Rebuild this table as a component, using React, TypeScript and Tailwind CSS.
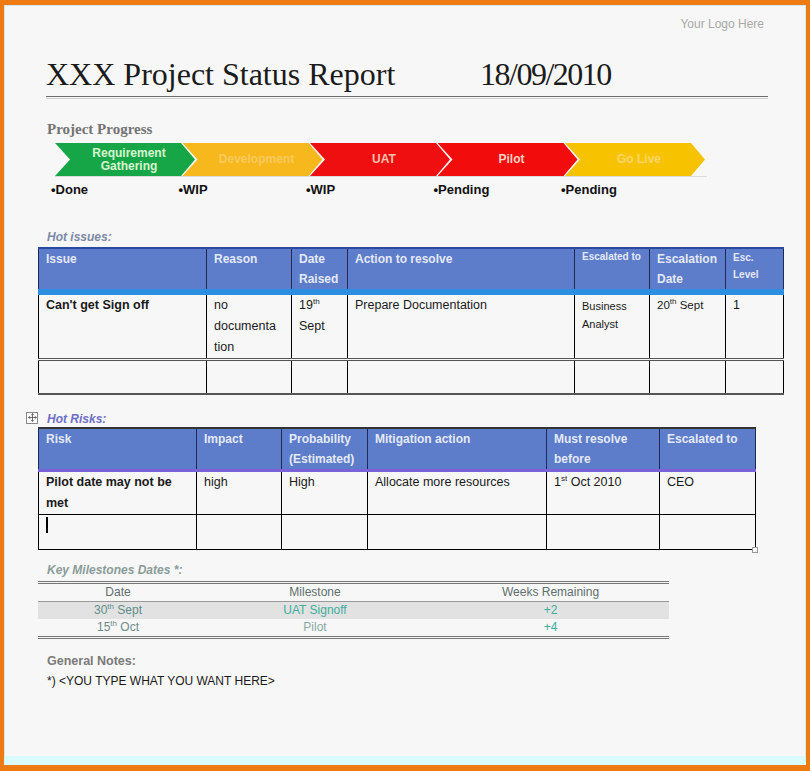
import React from "react";
import { Move } from "lucide-react";

const SANS = "font-['Liberation_Sans',Arial,sans-serif]";
const SERIF = "font-['Liberation_Serif','Times_New_Roman',serif]";

const STEPS = [
  { label: "Requirement Gathering", bg: "bg-[#17a647]", fg: "text-[#d8f5d0]", status: "Done" },
  { label: "Development", bg: "bg-[#f6b81c]", fg: "text-[#f9c95e]", status: "WIP" },
  { label: "UAT", bg: "bg-[#f00f10]", fg: "text-[#f7c2b0]", status: "WIP" },
  { label: "Pilot", bg: "bg-[#f20c0c]", fg: "text-[#f7d0c4]", status: "Pending" },
  { label: "Go Live", bg: "bg-[#f7c300]", fg: "text-[#f9d46a]", status: "Pending" },
];

const Ord = ({ n, s }: { n: string; s: string }) => (
  <span>
    {n}
    <span className="relative -top-[5px] text-[8px] leading-none">{s}</span>
  </span>
);

const th = "align-top text-left font-bold text-[12px] leading-[20px] text-[#e4e9f6] px-[7px] pt-0 border-x border-[#1e2a55]";
const td = "align-top text-left text-[12.5px] leading-[21px] text-[#1a1a1a] px-[7px] pt-0 border-x border-black";

const App: React.FC = () => {
  return (
    <div className="w-[810px] h-[771px] bg-[#ee7a12] p-[4px] pt-[5px] pb-[6px]">
      <div className={`h-full bg-[#f7f7f7] border-x border-t border-[#cfeaf3] border-b-[9px] border-b-[#d9fbfb] pl-[33px] ${SANS}`}>
        {/* logo */}
        <div className="flex justify-end pr-[41px] pt-[11px] text-[12px] leading-[14px] text-[#a8a8a8]">
          Your Logo Here
        </div>

        {/* title */}
        <div className={`flex items-baseline ml-[8px] mt-[25px] ${SERIF} text-[#1b1b1b] text-[32px] leading-[36px]`}>
          <div className="w-[434px]">XXX Project Status Report</div>
          <div className="tracking-[-1.5px]">18/09/2010</div>
        </div>
        <div className="ml-[8px] mt-[4px] w-[722px] h-[3px] border-t border-[#6a6a6a] border-b border-b-[#d0d0d0]" />

        {/* progress */}
        <div className={`ml-[9px] mt-[22px] ${SERIF} font-bold text-[15px] leading-[16px] text-[#747474]`}>
          Project Progress
        </div>
        <div className="flex ml-[17px] mt-[6px]">
          {STEPS.map((s, i) => (
            <div
              key={s.label}
              className={[
                "w-[140px] h-[33px] flex items-center justify-center pl-[14px] pr-[6px] text-center font-bold text-[12px] leading-[13px]",
                "[clip-path:polygon(0_0,calc(100%-14px)_0,100%_50%,calc(100%-14px)_100%,0_100%,15px_50%)]",
                s.bg,
                s.fg,
                i > 0 ? "-ml-[12.5px]" : "",
              ].join(" ")}
            >
              {s.label}
            </div>
          ))}
        </div>
        <div className="ml-[17px] w-[652px] h-px bg-[#dcdcdc]" />
        <div className="flex ml-[13px] mt-[5px]">
          {STEPS.map((s, i) => (
            <div key={i} className="w-[127.5px] font-bold text-[13px] leading-[15px] text-[#111]">
              •{s.status}
            </div>
          ))}
        </div>

        {/* hot issues */}
        <div className="ml-[9px] mt-[33px] italic font-bold text-[12px] leading-[14px] text-[#7c8aa6]">Hot issues:</div>
        <table className="mt-[3px] border-collapse table-fixed w-[745px] border border-black">
          <colgroup>
            <col className="w-[168px]" />
            <col className="w-[85px]" />
            <col className="w-[56px]" />
            <col className="w-[227px]" />
            <col className="w-[75px]" />
            <col className="w-[76px]" />
            <col className="w-[58px]" />
          </colgroup>
          <thead>
            <tr className="h-[42px] bg-[#5d7cc9] border-t-2 border-t-[#2a4aa0] border-b-[6px] border-b-[#2d8fe0]">
              <th className={th}>Issue</th>
              <th className={th}>Reason</th>
              <th className={th}>Date Raised</th>
              <th className={th}>Action to resolve</th>
              <th className={`${th} !text-[10px] !leading-[16px]`}>Escalated to</th>
              <th className={th}>Escalation Date</th>
              <th className={`${th} !text-[10px] !leading-[17px]`}>Esc. Level</th>
            </tr>
          </thead>
          <tbody>
            <tr className="h-[60px] border-b-[3px] border-double border-[#555]">
              <td className={`${td} font-bold`}>Can't get Sign off</td>
              <td className={td}>
                no
                <br />
                documenta
                <br />
                tion
              </td>
              <td className={td}>
                <Ord n="19" s="th" />
                <br />
                Sept
              </td>
              <td className={td}>Prepare Documentation</td>
              <td className={`${td} !text-[11px] !leading-[18px] !pt-[2px]`}>Business Analyst</td>
              <td className={`${td} !text-[11.5px]`}>
                <Ord n="20" s="th" /> Sept
              </td>
              <td className={td}>1</td>
            </tr>
            <tr className="h-[34px] border-b-2 border-[#555]">
              {Array.from({ length: 7 }).map((_, i) => (
                <td key={i} className={td} />
              ))}
            </tr>
          </tbody>
        </table>

        {/* hot risks */}
        <div className="relative ml-[9px] mt-[17px] italic font-bold text-[12px] leading-[14px] text-[#6f6fc6]">
          <span className="absolute -left-[21px] top-[0px] w-[12px] h-[12px] border border-[#888] bg-white flex items-center justify-center">
            <Move size={9} strokeWidth={2} className="text-[#444]" />
          </span>
          Hot Risks:
        </div>
        <div className="relative w-[717px] mt-[1px]">
          <table className="border-collapse table-fixed w-[717px] border border-black">
            <colgroup>
              <col className="w-[158px]" />
              <col className="w-[85px]" />
              <col className="w-[86px]" />
              <col className="w-[179px]" />
              <col className="w-[113px]" />
              <col className="w-[96px]" />
            </colgroup>
            <thead>
              <tr className="h-[35px] bg-[#5d7cc9] border-t-2 border-t-[#333] border-b-[3px] border-b-[#7a62d8]">
                <th className={th}>Risk</th>
                <th className={th}>Impact</th>
                <th className={th}>Probability (Estimated)</th>
                <th className={th}>Mitigation action</th>
                <th className={th}>Must resolve before</th>
                <th className={th}>Escalated to</th>
              </tr>
            </thead>
            <tbody>
              <tr className="h-[41px] border-b border-black">
                <td className={`${td} font-bold`}>Pilot date may not be met</td>
                <td className={td}>high</td>
                <td className={td}>High</td>
                <td className={td}>Allocate more resources</td>
                <td className={td}>
                  <Ord n="1" s="st" /> Oct 2010
                </td>
                <td className={td}>CEO</td>
              </tr>
              <tr className="h-[35px]">
                <td className={td}>
                  <span className="block mt-[2px] w-[2px] h-[16px] bg-black" />
                </td>
                {Array.from({ length: 5 }).map((_, i) => (
                  <td key={i} className={td} />
                ))}
              </tr>
            </tbody>
          </table>
          <span className="absolute -right-[3px] -bottom-[3px] w-[6px] h-[6px] border border-[#999] bg-white" />
        </div>

        {/* milestones */}
        <div className="ml-[9px] mt-[13px] italic font-bold text-[12px] leading-[14px] text-[#8a9c9a]">
          Key Milestones Dates *:
        </div>
        <table className="mt-[4px] border-collapse table-fixed w-[631px] text-[12px] leading-[17px]">
          <colgroup>
            <col className="w-[160px]" />
            <col className="w-[234px]" />
            <col className="w-[237px]" />
          </colgroup>
          <thead>
            <tr className="h-[19px] border-t-[3px] border-double border-[#777] border-b border-b-[#999]">
              <th className="font-normal text-center text-[#5f6f6d]">Date</th>
              <th className="font-normal text-center text-[#5f6f6d]">Milestone</th>
              <th className="font-normal text-center text-[#5f6f6d]">Weeks Remaining</th>
            </tr>
          </thead>
          <tbody>
            <tr className="h-[18px] bg-[#e2e2e2]">
              <td className="text-center text-[#5e8f88]">
                <Ord n="30" s="th" /> Sept
              </td>
              <td className="text-center text-[#3fae9d]">UAT Signoff</td>
              <td className="text-center text-[#3fae9d]">+2</td>
            </tr>
            <tr className="h-[17px] border-b-[3px] border-double border-[#777]">
              <td className="text-center text-[#6f8a86]">
                <Ord n="15" s="th" /> Oct
              </td>
              <td className="text-center text-[#8aa9a4]">Pilot</td>
              <td className="text-center text-[#3fae9d]">+4</td>
            </tr>
          </tbody>
        </table>

        {/* notes */}
        <div className="ml-[9px] mt-[15px] font-bold text-[12.5px] leading-[14px] text-[#7a7a7a]">General Notes:</div>
        <div className="ml-[9px] mt-[6px] text-[12px] leading-[14px] text-[#1a1a1a]">
          *) &lt;YOU TYPE WHAT YOU WANT HERE&gt;
        </div>
      </div>
    </div>
  );
};

export default App;
